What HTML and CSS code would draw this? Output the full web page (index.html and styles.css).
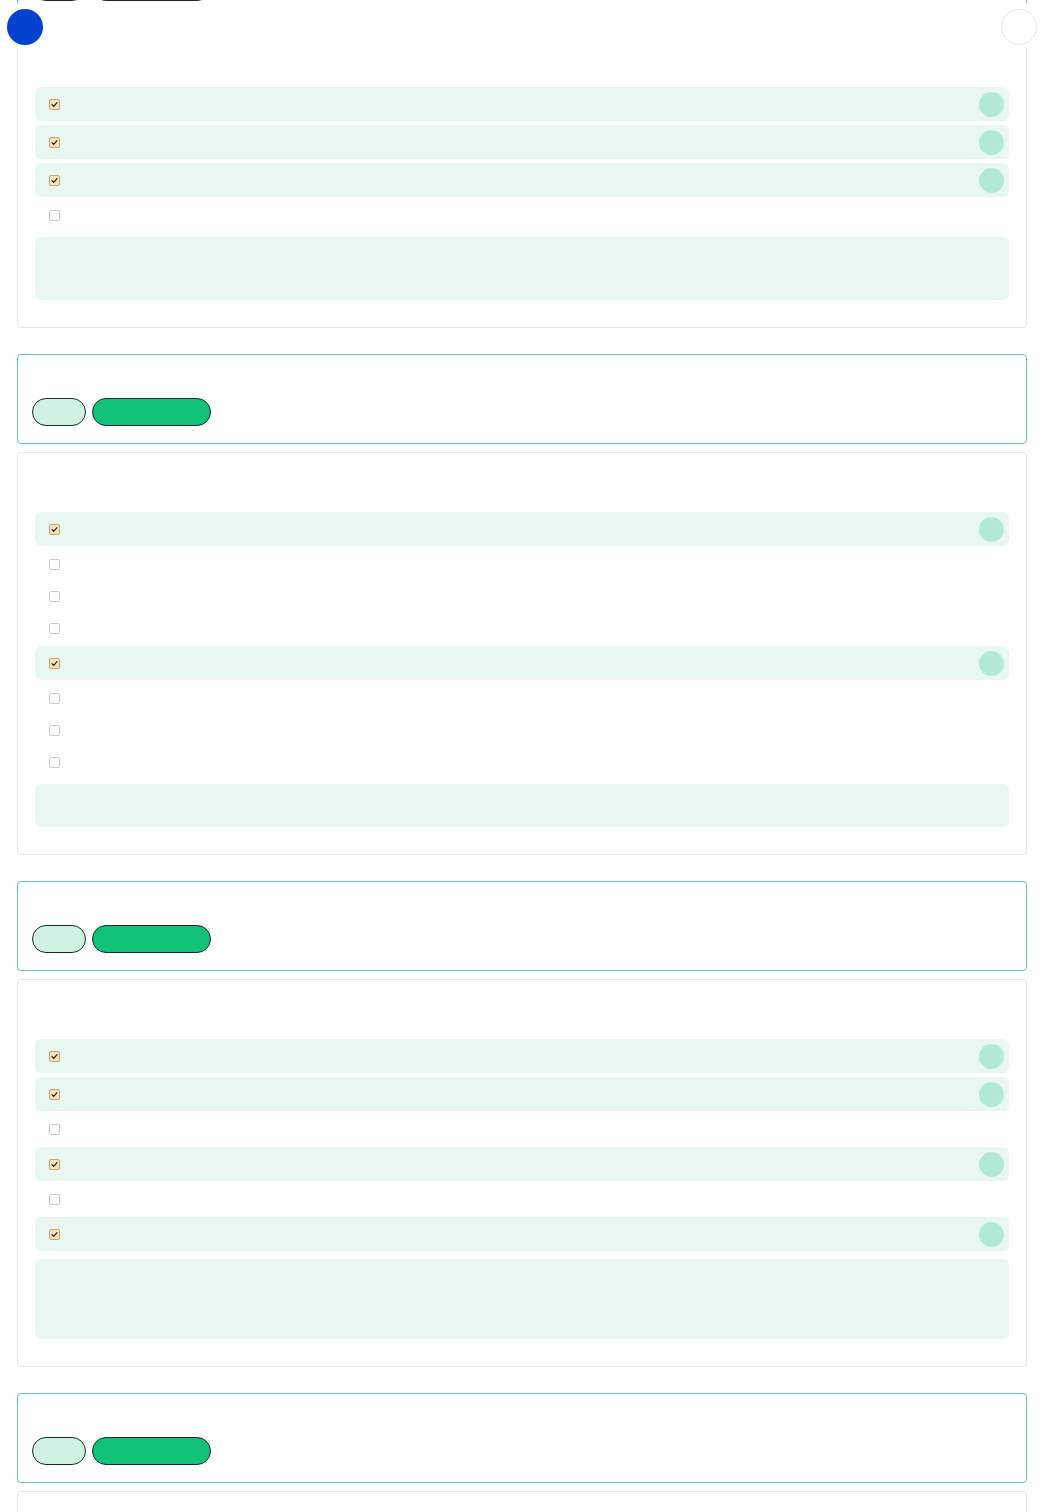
FILE: index.html
```html
<!DOCTYPE html>
<html lang="en">
<head>
<meta charset="utf-8">
<title>Checklist</title>
<link rel="stylesheet" href="styles.css">
</head>
<body>
<header class="topbar">
  <span class="dot dot-blue"></span>
  <span class="dot dot-white"></span>
</header>
<main class="page">
  <section class="group">
    <div class="panel">
      <div class="actions"><span class="pill pill-light"></span><span class="pill pill-green"></span></div>
    </div>
    <div class="card">
      <div class="card-head"></div>
      <div class="row row-on"><span class="box"><svg viewBox="0 0 11 11"><path d="M2.4 5.6 L4.5 7.7 L8.6 3.2" fill="none" stroke="#222" stroke-width="1.5" stroke-linecap="round" stroke-linejoin="round"/></svg></span><span class="mark"></span></div>
      <div class="row row-on"><span class="box"><svg viewBox="0 0 11 11"><path d="M2.4 5.6 L4.5 7.7 L8.6 3.2" fill="none" stroke="#222" stroke-width="1.5" stroke-linecap="round" stroke-linejoin="round"/></svg></span><span class="mark"></span></div>
      <div class="row row-on"><span class="box"><svg viewBox="0 0 11 11"><path d="M2.4 5.6 L4.5 7.7 L8.6 3.2" fill="none" stroke="#222" stroke-width="1.5" stroke-linecap="round" stroke-linejoin="round"/></svg></span><span class="mark"></span></div>
      <div class="row"><span class="box"></span></div>
      <div class="note note-m"></div>
    </div>
  </section>

  <section class="group">
    <div class="panel">
      <div class="actions"><span class="pill pill-light"></span><span class="pill pill-green"></span></div>
    </div>
    <div class="card">
      <div class="card-head"></div>
      <div class="row row-on"><span class="box"><svg viewBox="0 0 11 11"><path d="M2.4 5.6 L4.5 7.7 L8.6 3.2" fill="none" stroke="#222" stroke-width="1.5" stroke-linecap="round" stroke-linejoin="round"/></svg></span><span class="mark"></span></div>
      <div class="row"><span class="box"></span></div>
      <div class="row"><span class="box"></span></div>
      <div class="row"><span class="box"></span></div>
      <div class="row row-on"><span class="box"><svg viewBox="0 0 11 11"><path d="M2.4 5.6 L4.5 7.7 L8.6 3.2" fill="none" stroke="#222" stroke-width="1.5" stroke-linecap="round" stroke-linejoin="round"/></svg></span><span class="mark"></span></div>
      <div class="row"><span class="box"></span></div>
      <div class="row"><span class="box"></span></div>
      <div class="row"><span class="box"></span></div>
      <div class="note note-s"></div>
    </div>
  </section>

  <section class="group">
    <div class="panel">
      <div class="actions"><span class="pill pill-light"></span><span class="pill pill-green"></span></div>
    </div>
    <div class="card">
      <div class="card-head"></div>
      <div class="row row-on"><span class="box"><svg viewBox="0 0 11 11"><path d="M2.4 5.6 L4.5 7.7 L8.6 3.2" fill="none" stroke="#222" stroke-width="1.5" stroke-linecap="round" stroke-linejoin="round"/></svg></span><span class="mark"></span></div>
      <div class="row row-on"><span class="box"><svg viewBox="0 0 11 11"><path d="M2.4 5.6 L4.5 7.7 L8.6 3.2" fill="none" stroke="#222" stroke-width="1.5" stroke-linecap="round" stroke-linejoin="round"/></svg></span><span class="mark"></span></div>
      <div class="row"><span class="box"></span></div>
      <div class="row row-on"><span class="box"><svg viewBox="0 0 11 11"><path d="M2.4 5.6 L4.5 7.7 L8.6 3.2" fill="none" stroke="#222" stroke-width="1.5" stroke-linecap="round" stroke-linejoin="round"/></svg></span><span class="mark"></span></div>
      <div class="row"><span class="box"></span></div>
      <div class="row row-on"><span class="box"><svg viewBox="0 0 11 11"><path d="M2.4 5.6 L4.5 7.7 L8.6 3.2" fill="none" stroke="#222" stroke-width="1.5" stroke-linecap="round" stroke-linejoin="round"/></svg></span><span class="mark"></span></div>
      <div class="note note-l"></div>
    </div>
  </section>

  <section class="group">
    <div class="panel">
      <div class="actions"><span class="pill pill-light"></span><span class="pill pill-green"></span></div>
    </div>
    <div class="card">
      <div class="card-head"></div>
      <div class="row row-on"><span class="box"><svg viewBox="0 0 11 11"><path d="M2.4 5.6 L4.5 7.7 L8.6 3.2" fill="none" stroke="#222" stroke-width="1.5" stroke-linecap="round" stroke-linejoin="round"/></svg></span><span class="mark"></span></div>
      <div class="row"><span class="box"></span></div>
      <div class="note note-s"></div>
    </div>
  </section>
</main>
</body>
</html>
```

FILE: styles.css
```css
* { box-sizing: border-box; }

html, body {
  margin: 0;
  padding: 0;
  background: #ffffff;
  font-family: "Liberation Sans", Arial, sans-serif;
}

.topbar {
  position: fixed;
  top: 3px;
  left: 0;
  right: 0;
  height: 45px;
  background: #ffffff;
  display: flex;
  justify-content: space-between;
  align-items: flex-start;
  padding: 6px 7px 0 7px;
  z-index: 10;
}

.dot {
  width: 36px;
  height: 36px;
  border-radius: 50%;
  display: block;
}

.dot-blue { background: #0442cf; }

.dot-white {
  background: #ffffff;
  border: 1px solid #e3e5e8;
}

.page {
  margin-top: -71px;
  padding: 0 17px;
  display: flex;
  flex-direction: column;
  gap: 26px;
}

.group {
  display: flex;
  flex-direction: column;
  gap: 8px;
}

.panel {
  height: 90px;
  border: 1px solid #5ccaa8;
  border-radius: 4px;
  padding: 43px 14px 0 14px;
  background: #ffffff;
}

.actions {
  display: flex;
  gap: 6px;
}

.pill {
  display: block;
  height: 28px;
  border: 1px solid #1c2a24;
  border-radius: 14px;
}

.pill-light { width: 54px; background: #d0f2e3; }
.pill-green { width: 119px; background: #12c27a; }

.card {
  border: 1px solid #e4e6e9;
  border-radius: 4px;
  padding: 17px 17px 27px 17px;
  background: #ffffff;
  display: flex;
  flex-direction: column;
  gap: 4px;
}

.card-head {
  height: 38px;
}

.row {
  height: 28px;
  display: flex;
  align-items: center;
  justify-content: space-between;
  padding: 0 5px 0 14px;
  border-radius: 6px;
}

.row-on {
  height: 34px;
  background: #e8f8f0;
}

.box {
  width: 11px;
  height: 11px;
  border: 1px solid #c9c9c9;
  border-radius: 2px;
  background: #ffffff;
  display: block;
}

.row-on .box {
  background: #f6e2bd;
  border-color: #c8a36e;
}

.box svg {
  display: block;
  width: 9px;
  height: 9px;
}

.mark {
  width: 25px;
  height: 25px;
  border-radius: 50%;
  background: #b2e9d3;
  display: block;
}

.note {
  margin-top: 4px;
  background: #e8f8f0;
  border-radius: 6px;
}

.note-s { height: 43px; }
.note-m { height: 63px; }
.note-l { height: 80px; }
```
